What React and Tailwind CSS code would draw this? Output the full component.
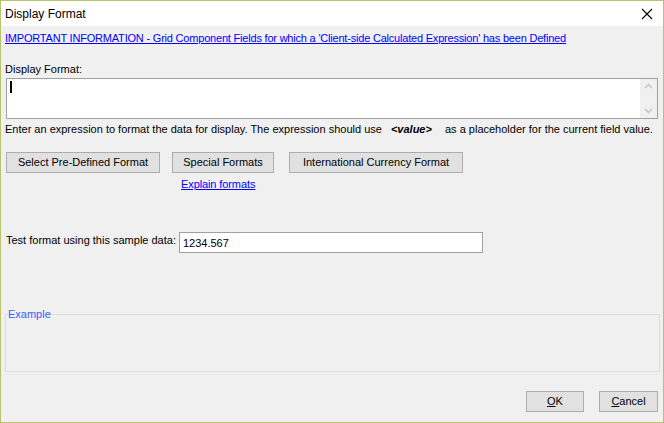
import React, { useState } from "react";

const font = { fontFamily: '"Liberation Sans", Arial, sans-serif' };

function WinButton({ children, className = "" }) {
  return (
    <button
      type="button"
      className={`h-[21px] border border-[#adadad] bg-[#e1e1e1] text-[11px] text-black leading-none ${className}`}
    >
      {children}
    </button>
  );
}

function ScrollArrows() {
  return (
    <div className="flex w-[17px] flex-col items-center justify-between bg-[#f0f0f0] py-[4px]">
      <svg width="9" height="6" viewBox="0 0 9 6">
        <path d="M1 5 L4.5 1.5 L8 5" fill="none" stroke="#c2c2c2" strokeWidth="1.5" />
      </svg>
      <svg width="9" height="6" viewBox="0 0 9 6">
        <path d="M1 1 L4.5 4.5 L8 1" fill="none" stroke="#c2c2c2" strokeWidth="1.5" />
      </svg>
    </div>
  );
}

export default function App() {
  const [sample, setSample] = useState("1234.567");

  return (
    <div
      className="flex h-[423px] w-[664px] flex-col border border-[#b8c36a] bg-[#f0f0f0] text-[11px] text-black"
      style={font}
    >
      {/* title bar */}
      <div className="flex h-[25px] shrink-0 items-center justify-between bg-white pl-[4px] pr-[10px]">
        <span className="text-[12px]">Display Format</span>
        <svg width="12" height="12" viewBox="0 0 12 12">
          <path d="M1 1 L11 11 M11 1 L1 11" stroke="#000" strokeWidth="1.1" />
        </svg>
      </div>

      <div className="flex flex-1 flex-col px-[4px]">
        <a
          href="#"
          className="mt-[5px] self-start text-[11px] leading-[14px] tracking-[-0.2px] text-[#0000ff] underline"
        >
          IMPORTANT INFORMATION - Grid Component Fields for which a 'Client-side Calculated Expression' has been Defined
        </a>

        <label className="mt-[17px] leading-[14px]">Display Format:</label>
        <div className="mt-[2px] ml-[1px] flex h-[41px] w-[652px] border border-[#a0a0a0] bg-white">
          <div className="flex-1 pl-[3px] pt-[2px]">
            <div className="h-[12px] w-[2px] bg-black" />
          </div>
          <ScrollArrows />
        </div>

        <p className="mt-[3px] leading-[14px]">
          Enter an expression to format the data for display. The expression should use{" "}
          <b className="ml-[6px] mr-[10px] italic">&lt;value&gt;</b> as a placeholder for the current field value.
        </p>

        <div className="mt-[16px] ml-[1px] flex items-start">
          <WinButton className="w-[154px]">Select Pre-Defined Format</WinButton>
          <div className="ml-[12px] flex flex-col items-start">
            <WinButton className="w-[102px]">Special Formats</WinButton>
            <a href="#" className="mt-[4px] ml-[9px] leading-[14px] tracking-[-0.1px] text-[#0000ff] underline">
              Explain formats
            </a>
          </div>
          <WinButton className="ml-[15px] w-[174px]">International Currency Format</WinButton>
        </div>

        <div className="mt-[41px] flex items-center">
          <span className="mb-[4px] ml-[1px]">Test format using this sample data:</span>
          <input
            value={sample}
            onChange={(e) => setSample(e.target.value)}
            className="ml-[3px] h-[21px] w-[304px] border border-[#a0a0a0] bg-white px-[3px] text-[11px] outline-none"
          />
        </div>

        {/* Example group box */}
        <fieldset className="mt-[55px] h-[64px] w-[655px] border border-[#dcdcdc] px-[2px]">
          <legend className="text-[11px] leading-[12px] text-[#3c5cfc]">Example</legend>
        </fieldset>

        <div className="mt-[19px] flex justify-end pr-[1px]">
          <WinButton className="w-[58px]">
            <span className="underline">O</span>K
          </WinButton>
          <WinButton className="ml-[15px] w-[59px]">
            <span className="underline">C</span>ancel
          </WinButton>
        </div>
      </div>
    </div>
  );
}
